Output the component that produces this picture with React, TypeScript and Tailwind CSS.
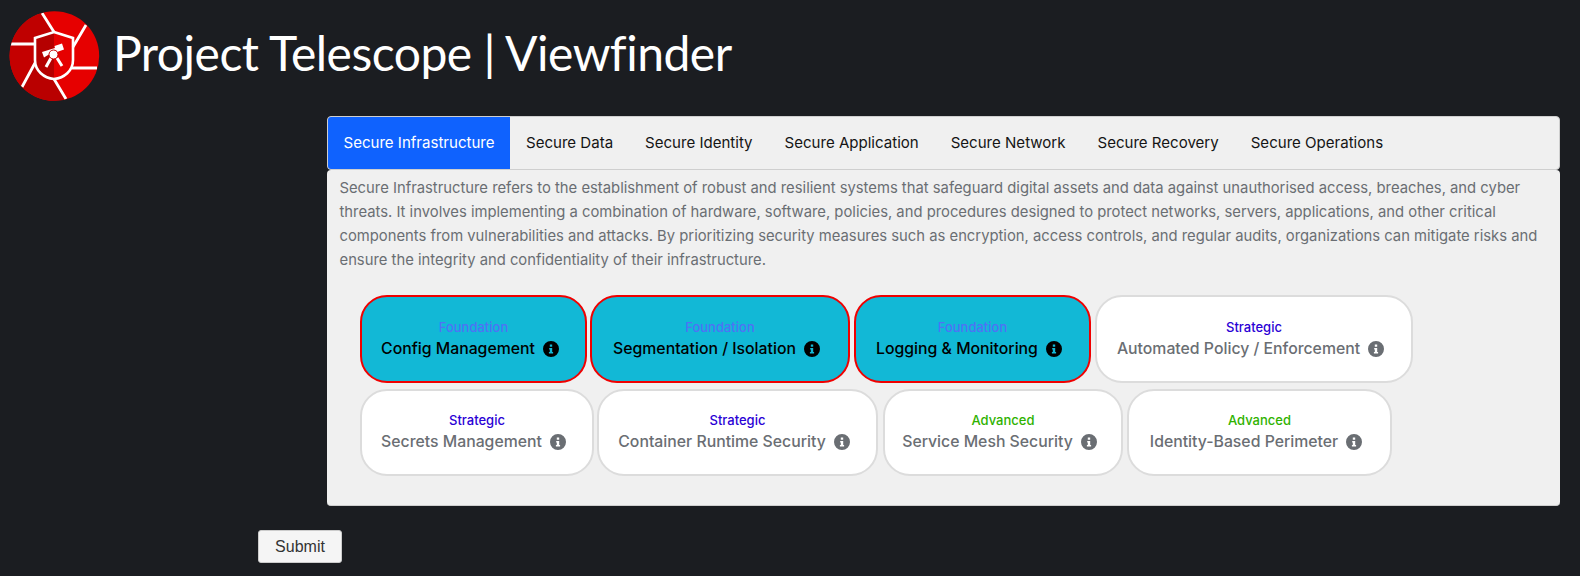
const tabs = ['Secure Infrastructure', 'Secure Data', 'Secure Identity', 'Secure Application', 'Secure Network', 'Secure Recovery', 'Secure Operations'];

interface Capability {
  level: 'Foundation' | 'Strategic' | 'Advanced';
  name: string;
  width: string;
  selected?: boolean;
}

const rowOne: Capability[] = [
  { level: 'Foundation', name: 'Config Management', width: 'w-[227px] h-[88px]', selected: true },
  { level: 'Foundation', name: 'Segmentation / Isolation', width: 'w-[260px] h-[88px] -ml-[1px]', selected: true },
  { level: 'Foundation', name: 'Logging & Monitoring', width: 'w-[237px] h-[88px]', selected: true },
  { level: 'Strategic', name: 'Automated Policy / Enforcement', width: 'w-[318px] h-[88px]' },
];

const rowTwo: Capability[] = [
  { level: 'Strategic', name: 'Secrets Management', width: 'w-[234px] h-[87px] pb-[2px]' },
  { level: 'Strategic', name: 'Container Runtime Security', width: 'w-[281px] h-[87px] pb-[2px] -ml-[1px]' },
  { level: 'Advanced', name: 'Service Mesh Security', width: 'w-[240px] h-[87px] pb-[2px] ml-[1px]' },
  { level: 'Advanced', name: 'Identity-Based Perimeter', width: 'w-[265px] h-[87px] pb-[2px]' },
];

const levelColor = {
  Foundation: 'text-[#4f72f5]',
  Strategic: 'text-[#2a00d5]',
  Advanced: 'text-[#2fb200]',
};

function Logo() {
  return (
    <svg viewBox="0 0 110 110" className="w-[110px] h-[110px] shrink-0">
      <defs>
        <clipPath id="disc">
          <circle cx="54.4" cy="56" r="44.8" />
        </clipPath>
      </defs>
      <g clipPath="url(#disc)">
        <rect width="110" height="110" fill="#e60000" />
        <path d="M54 32L40 8H4V44H35Z" fill="#bf0000" />
        <path d="M35 44H4V90H20L35 63Z" fill="#c40000" />
        <path d="M35 63L20 90V106H70L54 79Z" fill="#b90000" />
        <path d="M42 13L54 32M86 25L73 47M97 68H72M66 99L54 79M22 87L35 63M10 44H35" stroke="#fff" strokeWidth="2.8" fill="none" />
      </g>
      <path d="M54 32L35 38V60C35 71 44 78 54 79Z" fill="#b50000" />
      <path d="M54 32L73 38V60C73 71 64 78 54 79C44 78 35 71 35 60V38Z" fill="none" stroke="#fff" strokeWidth="2.6" />
      <path d="M42 52L55 48L54.5 46L62 43.5L64 49.5L57 52L56 50L44 57.5Z" fill="#fff" />
      <path d="M51 58L46 67M57 58L62 66" stroke="#fff" strokeWidth="3" fill="none" />
      <circle cx="53.5" cy="54.5" r="4.5" fill="#fff" stroke="#c40000" strokeWidth="1" />
    </svg>
  );
}

function InfoIcon({ selected }: { selected?: boolean }) {
  return (
    <svg viewBox="0 0 16 16" className="w-4 h-4 shrink-0" fill={selected ? '#000' : '#6a6e73'}>
      <path fillRule="evenodd" d="M8 0a8 8 0 1 1 0 16A8 8 0 0 1 8 0ZM6.8 3.6h2.4v2.1H6.8ZM6.2 7h3v4.1h.9v1.4H5.9v-1.4h.9V8.4h-.6Z" />
    </svg>
  );
}

function Card({ item }: { item: Capability }) {
  return (
    <div
      className={`${item.width} rounded-[27px] border-2 flex flex-col items-center justify-center shrink-0 ${
        item.selected ? 'bg-[#12b8d6] border-[#f00000]' : 'bg-white border-[#dcdcdc]'
      }`}
    >
      <div className={`text-[13px] leading-[20px] font-medium ${levelColor[item.level]}`}>{item.level}</div>
      <div className={`pr-[7px] flex items-center gap-2 text-[15.8px] leading-[24px] font-medium ${item.selected ? 'text-black' : 'text-[#6a6e73]'}`}>
        {item.name}
        <InfoIcon selected={item.selected} />
      </div>
    </div>
  );
}

export default function App() {
  return (
    <div className="h-[576px] overflow-hidden bg-[#1b1d21] font-['Inter',sans-serif]">
      <header className="h-[116px] flex items-start">
        <Logo />
        <h1 className="ml-[3px] mt-[23px] text-[48px] leading-[60px] font-normal text-white tracking-[-0.5px] font-['Lato',sans-serif] whitespace-nowrap">
          Project Telescope | Viewfinder
        </h1>
      </header>

      <div className="ml-[327px] w-[1233px]">
        <div className="h-[54px] flex bg-[#f0f0f0] border border-[#cfcfcf] rounded-[4px] overflow-hidden">
          {tabs.map((tab, i) => (
            <div
              key={tab}
              className={`flex items-center text-[15.05px] whitespace-nowrap ${i === 0 ? 'px-[15.5px] bg-[#0f62fe] text-white' : 'px-4 text-[#151515]'}`}
            >
              {tab}
            </div>
          ))}
        </div>
        <div className="h-[336px] bg-[#f0f0f0] rounded-[4px] border-b border-[#cfcfcf] px-[12.5px] pt-[6px]">
          <p className="text-[14.8px] leading-[24px] text-[#6a6e73] whitespace-nowrap">
            Secure Infrastructure refers to the establishment of robust and resilient systems that safeguard digital assets and data against unauthorised access, breaches, and cyber
            <br />
            threats. It involves implementing a combination of hardware, software, policies, and procedures designed to protect networks, servers, applications, and other critical
            <br />
            components from vulnerabilities and attacks. By prioritizing security measures such as encryption, access controls, and regular audits, organizations can mitigate risks and
            <br />
            ensure the integrity and confidentiality of their infrastructure.
          </p>
          <div className="mt-[23px] ml-[20.5px] flex flex-col gap-[6px]">
            <div className="flex gap-[4px]">
              {rowOne.map(item => <Card key={item.name} item={item} />)}
            </div>
            <div className="flex gap-[4px]">
              {rowTwo.map(item => <Card key={item.name} item={item} />)}
            </div>
          </div>
        </div>
      </div>

      <button className="block ml-[258px] mt-[24px] w-[84px] h-[33px] bg-[#f5f5f5] border border-[#cccccc] rounded-[3px] text-[16px] text-[#333] font-['Liberation_Sans',sans-serif]">
        Submit
      </button>
    </div>
  );
}
